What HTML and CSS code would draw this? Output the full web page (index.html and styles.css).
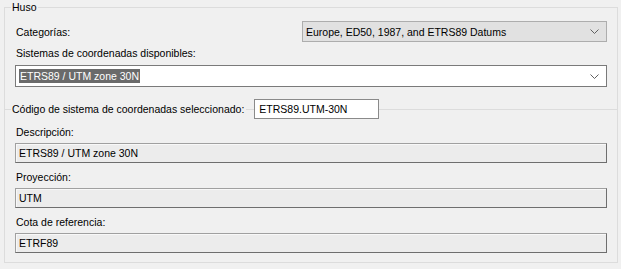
FILE: index.html
```html
<!DOCTYPE html>
<html lang="es">
<head>
    <meta charset="UTF-8">
    <title>Huso</title>
    <link rel="stylesheet" href="styles.css">
</head>
<body>

    <!-- Grupo Huso -->
    <fieldset class="group">
        <legend class="group-title">Huso</legend>

        <div class="row-cat">
            <span class="label">Categorías:</span>
            <div class="combo combo-gray">
                <span class="combo-text">Europe, ED50, 1987, and ETRS89 Datums</span>
                <svg class="chevron" width="9" height="5" viewBox="0 0 9 5"><path d="M0.5 0.5 L4.5 4.5 L8.5 0.5" fill="none" stroke="#606060" stroke-width="1"/></svg>
            </div>
        </div>

        <div class="label label-top">Sistemas de coordenadas disponibles:</div>
        <div class="combo combo-white">
            <span class="combo-text"><span class="selected">ETRS89 / UTM zone 30N</span></span>
            <svg class="chevron" width="9" height="5" viewBox="0 0 9 5"><path d="M0.5 0.5 L4.5 4.5 L8.5 0.5" fill="none" stroke="#606060" stroke-width="1"/></svg>
        </div>

        <!-- codigo seleccionado -->
        <div class="row-code">
            <span class="rule rule-short"></span>
            <span class="label code-label">Código de sistema de coordenadas seleccionado:</span>
            <span class="rule rule-gap"></span>
            <div class="textbox">ETRS89.UTM-30N</div>
            <span class="rule rule-fill"></span>
        </div>

        <div class="label label-field">Descripción:</div>
        <div class="readonly">ETRS89 / UTM zone 30N</div>

        <div class="label label-field">Proyección:</div>
        <div class="readonly">UTM</div>

        <div class="label label-field">Cota de referencia:</div>
        <div class="readonly">ETRF89</div>
    </fieldset>

</body>
</html>
```

FILE: styles.css
```css
/* base */
body {
    margin: 0;
    background: #f0f0f0;
    font-family: "Liberation Sans", Arial, sans-serif;
    font-size: 10.5px;
    color: #000;
}

/* group box */
.group {
    box-sizing: border-box;
    width: 614px;
    height: 262px;
    margin: 1px 0 0 4px;
    padding: 7px 10px 10px 10px;
    border: 1px solid #dcdcdc;
}

.group-title {
    margin-left: -4px;
    padding: 0 1px;
    line-height: 13px;
}

.label {
    display: block;
    line-height: 14px;
    padding-left: 1px;
}

.row-cat {
    display: flex;
    justify-content: space-between;
    align-items: center;
}

.row-cat .label {
    display: inline;
}

/* combo boxes */
.combo {
    box-sizing: border-box;
    display: flex;
    align-items: center;
    justify-content: space-between;
}

.combo-gray {
    width: 305px;
    height: 21px;
    background: #e1e1e1;
    border: 1px solid #adadad;
    padding: 0 7px 0 3px;
}

.combo-white {
    width: 592px;
    height: 22px;
    background: #fff;
    border: 1px solid #7a7a7a;
    padding: 0 7px 0 3px;
}

.combo-text {
    white-space: nowrap;
}

.selected {
    background: #6a6a6a;
    color: #fff;
    padding: 1px 1px;
}

.label-top {
    margin-top: 4px;
    margin-bottom: 5px;
}

/* fila del codigo */
.row-code {
    display: flex;
    align-items: center;
    margin: 12px -10px 0 -10px;
    height: 20px;
}

.rule {
    height: 1px;
    background: #dcdcdc;
}

.rule-short {
    width: 6px;
}

.code-label {
    display: inline;
    padding: 0 2px 0 1px;
}

.rule-gap {
    width: 8px;
}

.rule-fill {
    flex: 1;
}

.textbox {
    box-sizing: border-box;
    width: 125px;
    height: 20px;
    background: #fff;
    border: 1px solid #8a8a8a;
    padding: 0 4px;
    line-height: 18px;
}

/* campos de solo lectura */
.label-field {
    margin-top: 7px;
    margin-bottom: 4px;
}

.row-code + .label-field {
    margin-top: 6px;
}

.readonly {
    box-sizing: border-box;
    width: 592px;
    height: 20px;
    background: #ececec;
    border: 1px solid;
    border-color: #a0a0a0 #6e6e6e #6e6e6e #a0a0a0;
    box-shadow: inset 1px 1px 0 #f8f8f8;
    padding: 0 3px;
    line-height: 18px;
}
```
